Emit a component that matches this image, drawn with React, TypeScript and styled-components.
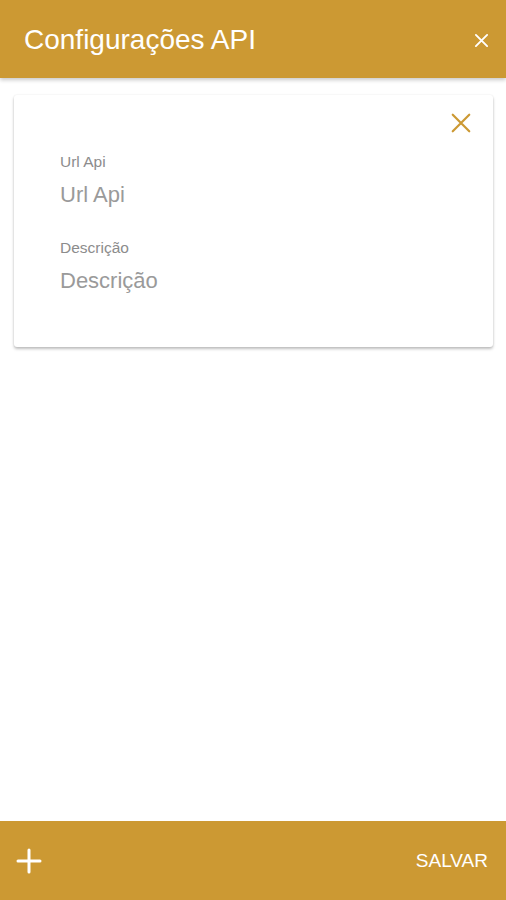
import styled, { createGlobalStyle } from "styled-components";

const GOLD = "#cc9933";

const GlobalStyle = createGlobalStyle`
    html, body {
        margin: 0;
        padding: 0;
        background: #ffffff;
        font-family: "Liberation Sans", Arial, sans-serif;
    }
`;

const Page = styled.div`
    height: 100vh;
    display: flex;
    flex-direction: column;
    background: #ffffff;
`;

const Header = styled.header`
    height: 78px;
    flex-shrink: 0;
    background: ${GOLD};
    display: flex;
    align-items: center;
    justify-content: space-between;
    padding: 2px 11px 0 24px;
    box-sizing: border-box;
    box-shadow: 0 2px 4px rgba(0, 0, 0, 0.22);
    position: relative;
    z-index: 1;
`;

const Title = styled.h1`
    margin: 0;
    font-size: 28px;
    font-weight: 400;
    color: #ffffff;
`;

const IconButton = styled.button<{ $size: number }>`
    width: ${(p) => p.$size}px;
    height: ${(p) => p.$size}px;
    padding: 0;
    border: none;
    background: transparent;
    display: flex;
    align-items: center;
    justify-content: center;
    cursor: pointer;
`;

const Content = styled.main`
    flex: 1;
    padding: 17px 13px 0 14px;
`;

const Card = styled.section`
    height: 252px;
    box-sizing: border-box;
    background: #ffffff;
    border-radius: 3px;
    box-shadow: 0 2px 3px rgba(0, 0, 0, 0.25), 0 0 2px rgba(0, 0, 0, 0.08);
    padding: 14px 18px 0 46px;
    display: flex;
    flex-direction: column;
`;

const CardTop = styled.div`
    display: flex;
    justify-content: flex-end;
    margin-bottom: 16px;
`;

const Field = styled.label`
    display: flex;
    flex-direction: column;
    margin-bottom: 31px;
`;

const FieldLabel = styled.span`
    font-size: 15.5px;
    color: #8c8c8c;
    line-height: 18px;
`;

const Input = styled.input`
    border: none;
    outline: none;
    padding: 0;
    margin-top: 11px;
    font-family: inherit;
    font-size: 22px;
    line-height: 26px;
    color: #333333;
    background: transparent;

    &::placeholder {
        color: #9a9a9a;
    }
`;

const Footer = styled.footer`
    height: 79px;
    flex-shrink: 0;
    background: ${GOLD};
    display: flex;
    align-items: center;
    justify-content: space-between;
    padding: 0 18px 0 15px;
`;

const SaveButton = styled.button`
    border: none;
    background: transparent;
    padding: 0;
    font-family: inherit;
    font-size: 19px;
    font-weight: 400;
    color: #ffffff;
    cursor: pointer;
`;

function CloseIcon({ size, color, stroke }: { size: number; color: string; stroke: number }) {
    return (
        <svg width={size} height={size} viewBox="0 0 24 24" fill="none">
            <path d="M3 3L21 21M21 3L3 21" stroke={color} strokeWidth={stroke} strokeLinecap="round" />
        </svg>
    );
}

function PlusIcon() {
    return (
        <svg width={26} height={26} viewBox="0 0 26 26" fill="none">
            <path d="M13 2V24M2 13H24" stroke="#ffffff" strokeWidth={3} strokeLinecap="round" />
        </svg>
    );
}

export default function App() {
    return (
        <Page>
            <GlobalStyle />
            <Header>
                <Title>Configurações API</Title>
                <IconButton $size={28} aria-label="Fechar">
                    <CloseIcon size={15} color="#ffffff" stroke={3} />
                </IconButton>
            </Header>

            <Content>
                <Card>
                    <CardTop>
                        <IconButton $size={28} aria-label="Remover">
                            <CloseIcon size={22} color={GOLD} stroke={2.4} />
                        </IconButton>
                    </CardTop>
                    <Field>
                        <FieldLabel>Url Api</FieldLabel>
                        <Input placeholder="Url Api" />
                    </Field>
                    <Field>
                        <FieldLabel>Descrição</FieldLabel>
                        <Input placeholder="Descrição" />
                    </Field>
                </Card>
            </Content>

            <Footer>
                <IconButton $size={28} aria-label="Adicionar">
                    <PlusIcon />
                </IconButton>
                <SaveButton>SALVAR</SaveButton>
            </Footer>
        </Page>
    );
}
